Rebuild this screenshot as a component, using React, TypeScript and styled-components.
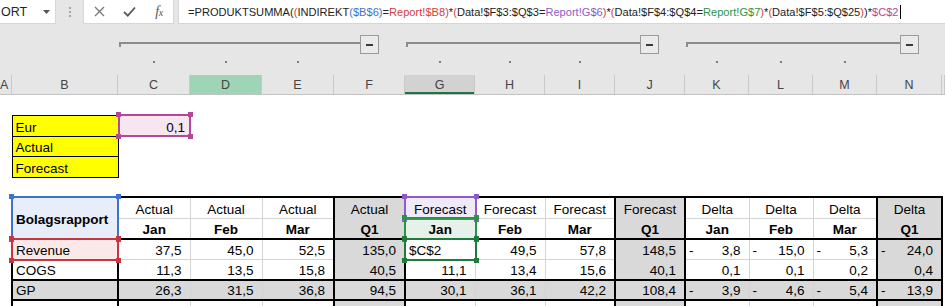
import React from 'react';
import styled, { createGlobalStyle } from 'styled-components';

const COLS = [12, 106, 72, 72, 72, 71, 70, 70, 70, 70, 64, 64, 64, 65, 3];
const LETTERS = ['A', 'B', 'C', 'D', 'E', 'F', 'G', 'H', 'I', 'J', 'K', 'L', 'M', 'N', ''];
const TEMPLATE = COLS.map((c) => `${c}px`).join(' ');
const TOTAL = COLS.reduce((a, b) => a + b, 0);
const UI = '"Liberation Sans", Arial, sans-serif';

const BLUE = '#3f72d0';
const RED = '#d4403b';
const PURPLE = '#8b5cc9';
const GREEN = '#2a9446';
const MAGENTA = '#b4479a';
const GRAY = '#d9d9d9';

const GlobalStyle = createGlobalStyle`
  html, body { margin: 0; padding: 0; background: #fff; }
  body { width: 945px; height: 306px; overflow: hidden; font-family: ${UI}; }
  #root { width: 945px; height: 306px; overflow: hidden; }
`;

const Page = styled.div`
  display: flex;
  flex-direction: column;
  width: 945px;
  height: 306px;
  overflow: hidden;
  background: #fff;
`;

/* ---------- formula bar ---------- */
const Toolbar = styled.div`
  display: flex;
  align-items: flex-start;
  height: 25px;
  flex: none;
  background: #e6e6e6;
`;

const NameBox = styled.div`
  width: 56px;
  height: 24px;
  flex: none;
  box-sizing: border-box;
  background: #fff;
  border-right: 1px solid #d6d6d6;
  border-bottom: 1px solid #d6d6d6;
  display: flex;
  align-items: center;
  justify-content: space-between;
  padding: 0 5px 0 1px;
  font-size: 12.5px;
  color: #262626;
`;

const Grip = styled.div`
  width: 27px;
  height: 24px;
  flex: none;
  display: flex;
  flex-direction: column;
  align-items: center;
  justify-content: center;
  gap: 2px;
`;

const GripDot = styled.span`
  width: 2px;
  height: 2px;
  background: #a6a6a6;
`;

const IconBox = styled.div`
  width: 91px;
  height: 24px;
  flex: none;
  box-sizing: border-box;
  background: #fff;
  border: 1px solid #d6d6d6;
  border-top: none;
  display: grid;
  grid-template-columns: 30px 30px 30px;
  align-items: center;
  justify-items: center;
`;

const Fx = styled.span`
  font-family: "Liberation Serif", "DejaVu Serif", serif;
  font-style: italic;
  font-size: 14px;
  color: #555;
  letter-spacing: -0.5px;
`;

const FxSub = styled.span`
  font-size: 10px;
`;

const FormulaBox = styled.div`
  flex: 1;
  min-width: 0;
  height: 24px;
  margin-left: 4px;
  box-sizing: border-box;
  background: #fff;
  border-left: 1px solid #d6d6d6;
  border-bottom: 1px solid #d6d6d6;
  display: flex;
  align-items: center;
  padding-left: 9px;
  font-size: 11.1px;
  color: #222;
  white-space: nowrap;
  overflow: hidden;
`;

const Tok = styled.span<{ $c?: string }>`
  color: ${(p) => p.$c ?? '#222'};
`;

const Caret = styled.span`
  display: inline-block;
  width: 1px;
  height: 14px;
  background: #000;
  margin-left: 1px;
`;

/* ---------- outline / grouping area ---------- */
const GroupArea = styled.div`
  display: grid;
  grid-template-columns: ${TEMPLATE};
  grid-template-rows: 10px 19px 7px 2px 12px;
  height: 50px;
  flex: none;
  background: #e6e6e6;
`;

const Bracket = styled.div<{ $from: number; $to: number; $trail: number }>`
  grid-row: 2;
  grid-column: ${(p) => p.$from} / ${(p) => p.$to};
  display: flex;
  align-items: flex-start;
  padding-left: 1px;
  padding-right: ${(p) => p.$trail}px;
`;

const BracketLine = styled.div`
  flex: 1;
  height: 5px;
  margin-top: 7px;
  box-sizing: border-box;
  border-top: 2px solid #8c8c8c;
  border-left: 2px solid #8c8c8c;
`;

const CollapseBtn = styled.div`
  width: 19px;
  height: 19px;
  flex: none;
  box-sizing: border-box;
  border: 1px solid #9a9a9a;
  background: #eaeaea;
  display: flex;
  align-items: center;
  justify-content: center;
`;

const Minus = styled.span`
  width: 7px;
  height: 2px;
  background: #3a3a3a;
`;

const OutlineDot = styled.span<{ $col: number }>`
  grid-row: 4;
  grid-column: ${(p) => p.$col};
  justify-self: center;
  width: 2px;
  height: 2px;
  background: #7e7e7e;
`;

/* ---------- column headers ---------- */
const ColHeaderRow = styled.div`
  display: grid;
  grid-template-columns: ${TEMPLATE};
  height: 20px;
  flex: none;
  box-sizing: border-box;
  background: #e6e6e6;
  border-bottom: 1px solid #c3c3c3;
`;

const ColHead = styled.div<{ $state?: 'hl' | 'sel'; $edge?: boolean }>`
  display: flex;
  align-items: center;
  justify-content: ${(p) => (p.$edge ? 'flex-start' : 'center')};
  box-sizing: border-box;
  overflow: hidden;
  font-size: 12.5px;
  color: #444;
  border-right: 1px solid #c9c9c9;
  background: ${(p) => (p.$state === 'hl' ? '#9fd5b7' : p.$state === 'sel' ? '#d2d2d2' : '#e6e6e6')};
  box-shadow: ${(p) => (p.$state === 'sel' ? 'inset 0 -2px 0 #217346' : 'none')};
`;

/* ---------- sheet ---------- */
const SheetWrap = styled.div`
  flex: 1;
  overflow: hidden;
`;

const Sheet = styled.table`
  border-collapse: collapse;
  table-layout: fixed;
  width: ${TOTAL}px;
  font-family: ${UI};
  font-size: 13.5px;
  color: #000;
`;

const Col = styled.col<{ $w: number }>`
  width: ${(p) => p.$w}px;
`;

const Row = styled.tr<{ $h: number }>`
  height: ${(p) => p.$h}px;
`;

type Line = 'thick' | 'thin' | 'black';
const border = (l?: Line) =>
  l === 'thick' ? '2px solid #000' : l === 'thin' ? '1px solid #d4d4d4' : l === 'black' ? '1px solid #000' : 'none';

type CellProps = {
  $bg?: string;
  $align?: 'left' | 'center' | 'right';
  $bold?: boolean;
  $mid?: boolean;
  $pr?: number;
  $t?: Line;
  $r?: Line;
  $b?: Line;
  $l?: Line;
};

const Cell = styled.td<CellProps>`
  position: relative;
  padding: ${(p) => (p.$mid ? '3px' : '0')} ${(p) => p.$pr ?? 3}px 0 3px;
  vertical-align: ${(p) => (p.$mid ? 'middle' : 'bottom')};
  line-height: 16px;
  white-space: nowrap;
  background: ${(p) => p.$bg ?? 'transparent'};
  text-align: ${(p) => p.$align ?? 'left'};
  font-weight: ${(p) => (p.$bold ? 700 : 400)};
  border-top: ${(p) => border(p.$t)};
  border-right: ${(p) => border(p.$r)};
  border-bottom: ${(p) => border(p.$b)};
  border-left: ${(p) => border(p.$l)};
`;

const Acct = styled.span`
  display: flex;
  justify-content: space-between;
`;

const Sel = styled.div<{ $c: string; $i: number }>`
  position: absolute;
  top: ${(p) => -p.$i}px;
  left: ${(p) => -p.$i}px;
  right: ${(p) => -p.$i}px;
  bottom: ${(p) => -p.$i}px;
  border: 2px solid ${(p) => p.$c};
  pointer-events: none;
  z-index: 2;
`;

const Handle = styled.span<{ $c: string; $v: 'top' | 'bottom'; $h: 'left' | 'right' }>`
  position: absolute;
  width: 5px;
  height: 5px;
  background: ${(p) => p.$c};
  ${(p) => p.$v}: -4px;
  ${(p) => p.$h}: -4px;
`;

const Selection = ({ c, i = 2 }: { c: string; i?: number }) => (
  <Sel $c={c} $i={i}>
    <Handle $c={c} $v="top" $h="left" />
    <Handle $c={c} $v="top" $h="right" />
    <Handle $c={c} $v="bottom" $h="left" />
    <Handle $c={c} $v="bottom" $h="right" />
  </Sel>
);

const Blank = ({ n }: { n: number }) => (
  <>
    {Array.from({ length: n }).map((_, i) => (
      <Cell key={i} />
    ))}
  </>
);

/* ---------- data ---------- */
const HEAD1 = ['Actual', 'Actual', 'Actual', 'Actual', 'Forecast', 'Forecast', 'Forecast', 'Forecast', 'Delta', 'Delta', 'Delta', 'Delta'];
const HEAD2 = ['Jan', 'Feb', 'Mar', 'Q1', 'Jan', 'Feb', 'Mar', 'Q1', 'Jan', 'Feb', 'Mar', 'Q1'];

type DataRow = { label: string; vals: string[]; kind: 'rev' | 'cogs' | 'gp' };
const DATA: DataRow[] = [
  { label: 'Revenue', kind: 'rev', vals: ['37,5', '45,0', '52,5', '135,0', '$C$2', '49,5', '57,8', '148,5', '-3,8', '-15,0', '-5,3', '-24,0'] },
  { label: 'COGS', kind: 'cogs', vals: ['11,3', '13,5', '15,8', '40,5', '11,1', '13,4', '15,6', '40,1', '0,1', '0,1', '0,2', '0,4'] },
  { label: 'GP', kind: 'gp', vals: ['26,3', '31,5', '36,8', '94,5', '30,1', '36,1', '42,2', '108,4', '-3,9', '-4,6', '-5,4', '-13,9'] },
];

const isQ = (k: number) => k % 4 === 3;
const rightLine = (k: number): Line => (k % 4 >= 2 ? 'thick' : 'thin');

const FORMULA: [string, string?][] = [
  ['=PRODUKTSUMMA('],
  ['(', RED],
  ['INDIREKT'],
  ['(', BLUE],
  ['$B$6', BLUE],
  [')', BLUE],
  ['='],
  ['Report!$B8', RED],
  [')', RED],
  ['*'],
  ['(', RED],
  ['Data!$F$3:$Q$3='],
  ['Report!G$6', PURPLE],
  [')', RED],
  ['*'],
  ['(', RED],
  ['Data!$F$4:$Q$4='],
  ['Report!G$7', GREEN],
  [')', RED],
  ['*'],
  ['(', RED],
  ['Data!$F$5:$Q$25'],
  [')', RED],
  [')*'],
  ['$C$2', MAGENTA],
];

export default function App() {
  return (
    <Page>
      <GlobalStyle />
      <Toolbar>
        <NameBox>
          <span>ORT</span>
          <svg width="7" height="4" viewBox="0 0 7 4">
            <path d="M0 0 L7 0 L3.5 4 Z" fill="#555" />
          </svg>
        </NameBox>
        <Grip>
          <GripDot />
          <GripDot />
          <GripDot />
        </Grip>
        <IconBox>
          <svg width="11" height="11" viewBox="0 0 11 11">
            <path d="M1 1 L10 10 M10 1 L1 10" stroke="#7a7a7a" strokeWidth="1.4" fill="none" />
          </svg>
          <svg width="13" height="11" viewBox="0 0 13 11">
            <path d="M1 6 L4.8 9.6 L12 1.5" stroke="#5a5a5a" strokeWidth="1.8" fill="none" />
          </svg>
          <Fx>
            f<FxSub>x</FxSub>
          </Fx>
        </IconBox>
        <FormulaBox>
          {FORMULA.map(([t, c], i) => (
            <Tok key={i} $c={c}>
              {t}
            </Tok>
          ))}
          <Caret />
        </FormulaBox>
      </Toolbar>

      <GroupArea>
        <Bracket $from={3} $to={7} $trail={26}>
          <BracketLine />
          <CollapseBtn>
            <Minus />
          </CollapseBtn>
        </Bracket>
        <Bracket $from={7} $to={11} $trail={26}>
          <BracketLine />
          <CollapseBtn>
            <Minus />
          </CollapseBtn>
        </Bracket>
        <Bracket $from={11} $to={15} $trail={23}>
          <BracketLine />
          <CollapseBtn>
            <Minus />
          </CollapseBtn>
        </Bracket>
        {[3, 4, 5, 7, 8, 9, 11, 12, 13].map((c) => (
          <OutlineDot key={c} $col={c} />
        ))}
      </GroupArea>

      <ColHeaderRow>
        {LETTERS.map((l, i) => (
          <ColHead key={i} $edge={i === 0} $state={i === 3 ? 'hl' : i === 6 ? 'sel' : undefined}>
            {l}
          </ColHead>
        ))}
      </ColHeaderRow>

      <SheetWrap>
        <Sheet>
          <colgroup>
            {COLS.map((w, i) => (
              <Col key={i} $w={w} />
            ))}
          </colgroup>
          <tbody>
            <Row $h={20}>
              <Blank n={15} />
            </Row>
            <Row $h={21}>
              <Cell />
              <Cell $bg="#ffff00" $t="black" $r="black" $b="black" $l="black">
                Eur
              </Cell>
              <Cell $bg="#f7e6f0" $align="right" $pr={5}>
                0,1
                <Selection c={MAGENTA} i={1} />
              </Cell>
              <Blank n={12} />
            </Row>
            <Row $h={20}>
              <Cell />
              <Cell $bg="#ffff00" $t="black" $r="black" $b="black" $l="black">
                Actual
              </Cell>
              <Blank n={13} />
            </Row>
            <Row $h={21}>
              <Cell />
              <Cell $bg="#ffff00" $t="black" $r="black" $b="black" $l="black">
                Forecast
              </Cell>
              <Blank n={13} />
            </Row>
            <Row $h={20}>
              <Blank n={15} />
            </Row>

            <Row $h={21}>
              <Cell />
              <Cell rowSpan={2} $bold $mid $bg="#e8eef9" $t="thick" $l="thick" $r="thick" $b="thick">
                Bolagsrapport
                <Selection c={BLUE} />
              </Cell>
              {HEAD1.map((h, k) => (
                <Cell
                  key={k}
                  $align="center"
                  $bg={k === 4 ? '#efe9f8' : isQ(k) ? GRAY : undefined}
                  $t="thick"
                  $r={rightLine(k)}
                  $b={isQ(k) ? undefined : 'thin'}
                >
                  {h}
                  {k === 4 && <Selection c={PURPLE} />}
                </Cell>
              ))}
              <Cell />
            </Row>
            <Row $h={21}>
              <Cell />
              {HEAD2.map((h, k) => (
                <Cell
                  key={k}
                  $align="center"
                  $bold
                  $bg={k === 4 ? '#e6f2e9' : isQ(k) ? GRAY : undefined}
                  $r={rightLine(k)}
                  $b="thick"
                >
                  {h}
                  {k === 4 && <Selection c={GREEN} />}
                </Cell>
              ))}
              <Cell />
            </Row>

            {DATA.map((row) => {
              const gp = row.kind === 'gp';
              const bottom: Line | undefined = row.kind === 'rev' ? 'thin' : 'thick';
              return (
                <Row key={row.label} $h={row.kind === 'cogs' ? 21 : 20}>
                  <Cell />
                  <Cell
                    $bg={row.kind === 'rev' ? '#fbe9e9' : gp ? GRAY : undefined}
                    $l="thick"
                    $r="thick"
                    $b={bottom}
                  >
                    {row.label}
                    {row.kind === 'rev' && <Selection c="#c9353d" />}
                  </Cell>
                  {row.vals.map((v, k) => {
                    const grayCell = gp || isQ(k);
                    const active = row.kind === 'rev' && k === 4;
                    const neg = v.startsWith('-');
                    return (
                      <Cell
                        key={k}
                        $align={active ? 'left' : 'right'}
                        $pr={active ? 3 : 8}
                        $bg={grayCell ? GRAY : undefined}
                        $r={rightLine(k)}
                        $b={row.kind === 'rev' && grayCell ? undefined : bottom}
                      >
                        {neg ? (
                          <Acct>
                            <span>-</span>
                            <span>{v.slice(1)}</span>
                          </Acct>
                        ) : (
                          v
                        )}
                        {active && <Selection c="#1e7b3a" />}
                      </Cell>
                    );
                  })}
                  <Cell />
                </Row>
              );
            })}

            <Row $h={20}>
              <Cell />
              <Cell $l="thick" $r="thick" />
              {HEAD2.map((_, k) => (
                <Cell key={k} $bg={isQ(k) ? GRAY : undefined} $r={rightLine(k)} />
              ))}
              <Cell />
            </Row>
          </tbody>
        </Sheet>
      </SheetWrap>
    </Page>
  );
}
